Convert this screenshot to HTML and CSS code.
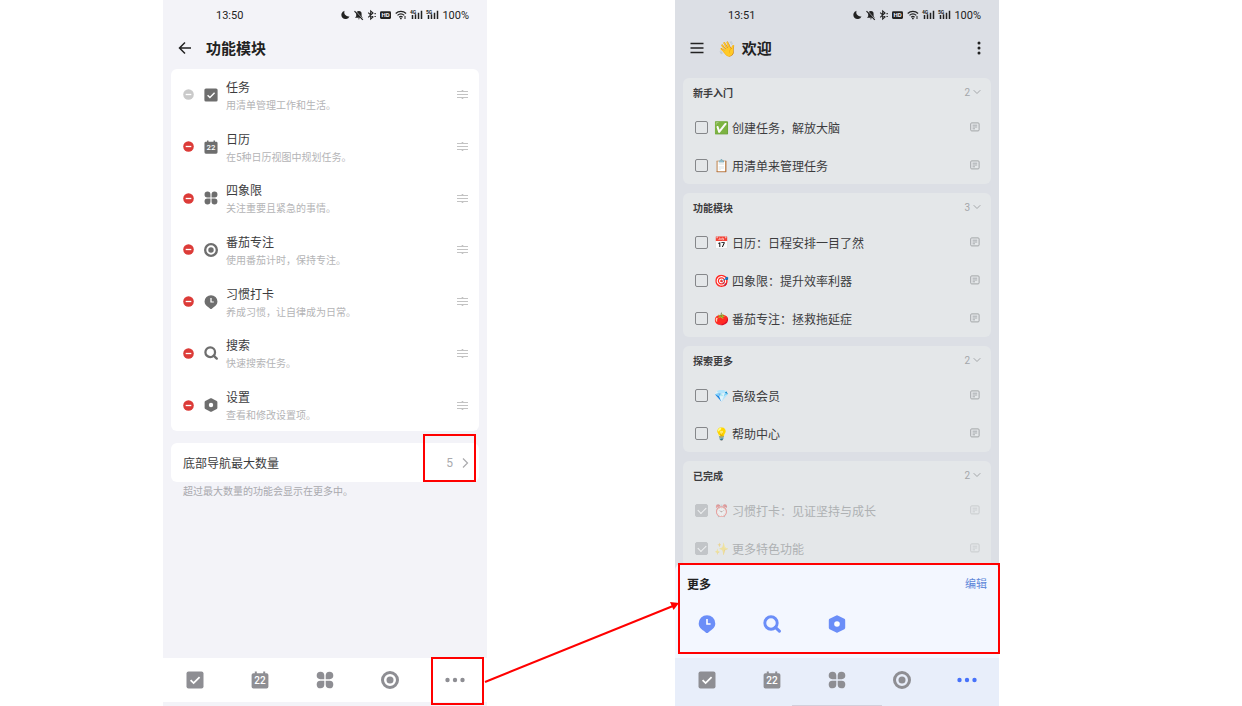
FILE: index.html
```
<!DOCTYPE html>
<html lang="zh-CN">

<head>
    <meta charset="UTF-8">
    <meta name="viewport" content="width=device-width, initial-scale=1.0">
    <title>功能模块</title>
    <link rel="stylesheet" href="styles.css">
</head>

<body>
    <!-- shared icons -->
    <svg class="sprite" aria-hidden="true">
        <symbol id="i-task" viewBox="0 0 18 18">
            <rect x="0.5" y="0.5" width="17" height="17" rx="2" fill="currentColor" />
            <path d="M4.6 9.2l3 2.9 6-6" fill="none" stroke="#fff" stroke-width="1.8" />
        </symbol>
        <symbol id="i-calendar" viewBox="0 0 18 18">
            <path d="M2.4 2.2h1.400V.6h2v1.6h6.4V.6h2v1.6h1.400a1.800 1.800 0 0 1 1.800 1.800v11.800a1.800 1.800 0 0 1-1.800 1.800H2.400a1.800 1.800 0 0 1-1.800-1.800V4a1.800 1.800 0 0 1 1.800-1.800z" fill="currentColor" />
            <text x="9" y="13.400" text-anchor="middle" class="cal-day">22</text>
        </symbol>
        <symbol id="i-quad" viewBox="0 0 18 18">
            <path d="M8.300 8.300H4.300A3.800 3.800 0 1 1 8.300 4.500zM9.700 8.300V4.500A3.800 3.800 0 1 1 13.700 8.300zM8.300 9.700v3.800A3.800 3.800 0 1 1 4.300 9.700zM9.700 9.700h4A3.800 3.800 0 1 1 9.700 13.500z" fill="currentColor" />
        </symbol>
        <symbol id="i-focus" viewBox="0 0 18 18">
            <circle cx="9" cy="9" r="7.500" fill="none" stroke="currentColor" stroke-width="3" />
            <circle cx="9" cy="9" r="3.500" fill="currentColor" />
        </symbol>
        <symbol id="i-habit" viewBox="0 0 18 18">
            <path d="M9 .2a8.300 8.300 0 0 1 8.300 8.200c0 3.600-2.700 5.700-5 7.400L10 17.700a1.600 1.600 0 0 1-2 0l-2.300-1.900C3.400 14.100.7 12 .7 8.400A8.300 8.300 0 0 1 9 .2z" fill="currentColor" />
            <path d="M9 4v5h3.600" fill="none" stroke="#fff" stroke-width="1.6" />
        </symbol>
        <symbol id="i-search" viewBox="0 0 18 18">
            <circle cx="8" cy="8" r="6.200" fill="none" stroke="currentColor" stroke-width="2.900" />
            <path d="M12.400 12.400l4 3.800" fill="none" stroke="currentColor" stroke-width="3" stroke-linecap="round" />
        </symbol>
        <symbol id="i-settings" viewBox="0 0 18 18">
            <path d="M9 1.800l6.700 3.400v7.600L9 16.200l-6.700-3.400V5.200z" fill="currentColor" stroke="currentColor" stroke-width="3" stroke-linejoin="round" />
            <circle cx="9" cy="9" r="2.800" fill="#fff" />
        </symbol>
        <symbol id="i-more" viewBox="0 0 20 18">
            <circle cx="2.500" cy="9" r="2.200" fill="currentColor" />
            <circle cx="10" cy="9" r="2.200" fill="currentColor" />
            <circle cx="17.500" cy="9" r="2.200" fill="currentColor" />
        </symbol>
        <symbol id="i-minus" viewBox="0 0 11 11">
            <circle cx="5.500" cy="5.500" r="5.300" fill="currentColor" />
            <path d="M2.700 5.500h5.600" stroke="#fff" stroke-width="1.300" />
        </symbol>
        <symbol id="i-drag" viewBox="0 0 11 11">
            <path d="M0 2.500h11M0 5.500h11M0 8.500h11M4.700 1.500h1.600M4.700 9.500h1.600" stroke="currentColor" stroke-width="0.900" />
        </symbol>
        <symbol id="i-note" viewBox="0 0 10 10">
            <rect x="0.700" y="0.900" width="8.400" height="8" rx="1" fill="none" stroke="currentColor" />
            <path d="M2.600 3.200h4.600M2.600 5h4.600M2.600 6.800h2.400" stroke="currentColor" stroke-width="0.900" />
        </symbol>
        <symbol id="i-down" viewBox="0 0 8 8">
            <path d="M.7 2.200L4 5.500l3.300-3.300" fill="none" stroke="currentColor" stroke-width="1" />
        </symbol>
        <symbol id="i-status" viewBox="0 0 99 12">
            <path d="M3.600 1.800A4.200 4.200 0 1 0 8.500 7.400 4.200 4.200 0 0 1 3.600 1.800z" fill="currentColor" />
            <path d="M14 8.800l1.200-1.500V4.800a2.700 2.700 0 0 1 5.400 0v2.500l1.200 1.500zM16.800 9.500h2.200l-1.100 1z" fill="currentColor" />
            <path d="M14.300 1.800l8 8.600" stroke="#e6e8ee" stroke-width="0.900" />
            <path d="M13.500 2.200l8.300 8.600" stroke="currentColor" stroke-width="1.200" />
            <path d="M27.200 3.700l4.800 4.300-2.300 2.100V1.900l2.300 2.100-4.800 4.300M33.500 4.600h1.300M33.500 7.500h1.300" fill="none" stroke="currentColor" stroke-width="1.100" />
            <rect x="39" y="2.300" width="11" height="7.600" rx="1.300" fill="currentColor" />
            <text x="44.500" y="8.200" text-anchor="middle" class="hd">HD</text>
            <path d="M54.700 4.500c3-2.900 7.400-2.900 10.400 0M56.500 6.400c2-1.900 4.800-1.900 6.800 0M58.200 8.200c1.100-1 2.300-1 3.400 0" fill="none" stroke="currentColor" stroke-width="1.200" />
            <circle cx="59.900" cy="9.400" r="0.900" fill="currentColor" />
            <path d="M64 7v3" stroke="currentColor" />
            <text x="69" y="4.800" class="net">4G</text>
            <path d="M71.500 10V6M74.500 10V5.300M77.500 10V3.800M80.500 10V1.800" stroke="currentColor" stroke-width="1.500" />
            <text x="85" y="4.800" class="net">5G</text>
            <path d="M87.500 10V6M90.500 10V5.300M93.500 10V3.800M96.500 10V1.800" stroke="currentColor" stroke-width="1.500" />
        </symbol>
    </svg>

    <main class="stage">
        <section class="phone phone-modules">
            <div class="status">
                <span>13:50</span>
                <svg class="status-icons"><use href="#i-status" /></svg>
                <span>100%</span>
            </div>
            <header class="topbar">
                <button class="icon-btn" aria-label="返回">
                    <svg width="14" height="14" viewBox="0 0 14 14"><path d="M7 1.500L1.500 7 7 12.500M1.500 7H13" fill="none" stroke="currentColor" stroke-width="1.500" /></svg>
                </button>
                <h1>功能模块</h1>
            </header>

            <ul class="modules">
                <li>
                    <button class="icon-btn remove" aria-label="移除任务" disabled><svg><use href="#i-minus" /></svg></button>
                    <svg class="module-icon"><use href="#i-task" /></svg>
                    <div class="module-text"><h2>任务</h2><p>用清单管理工作和生活。</p></div>
                    <button class="icon-btn drag" aria-label="排序"><svg><use href="#i-drag" /></svg></button>
                </li>
                <li>
                    <button class="icon-btn remove" aria-label="移除日历"><svg><use href="#i-minus" /></svg></button>
                    <svg class="module-icon"><use href="#i-calendar" /></svg>
                    <div class="module-text"><h2>日历</h2><p>在5种日历视图中规划任务。</p></div>
                    <button class="icon-btn drag" aria-label="排序"><svg><use href="#i-drag" /></svg></button>
                </li>
                <li>
                    <button class="icon-btn remove" aria-label="移除四象限"><svg><use href="#i-minus" /></svg></button>
                    <svg class="module-icon"><use href="#i-quad" /></svg>
                    <div class="module-text"><h2>四象限</h2><p>关注重要且紧急的事情。</p></div>
                    <button class="icon-btn drag" aria-label="排序"><svg><use href="#i-drag" /></svg></button>
                </li>
                <li>
                    <button class="icon-btn remove" aria-label="移除番茄专注"><svg><use href="#i-minus" /></svg></button>
                    <svg class="module-icon"><use href="#i-focus" /></svg>
                    <div class="module-text"><h2>番茄专注</h2><p>使用番茄计时，保持专注。</p></div>
                    <button class="icon-btn drag" aria-label="排序"><svg><use href="#i-drag" /></svg></button>
                </li>
                <li>
                    <button class="icon-btn remove" aria-label="移除习惯打卡"><svg><use href="#i-minus" /></svg></button>
                    <svg class="module-icon"><use href="#i-habit" /></svg>
                    <div class="module-text"><h2>习惯打卡</h2><p>养成习惯，让自律成为日常。</p></div>
                    <button class="icon-btn drag" aria-label="排序"><svg><use href="#i-drag" /></svg></button>
                </li>
                <li>
                    <button class="icon-btn remove" aria-label="移除搜索"><svg><use href="#i-minus" /></svg></button>
                    <svg class="module-icon"><use href="#i-search" /></svg>
                    <div class="module-text"><h2>搜索</h2><p>快速搜索任务。</p></div>
                    <button class="icon-btn drag" aria-label="排序"><svg><use href="#i-drag" /></svg></button>
                </li>
                <li>
                    <button class="icon-btn remove" aria-label="移除设置"><svg><use href="#i-minus" /></svg></button>
                    <svg class="module-icon"><use href="#i-settings" /></svg>
                    <div class="module-text"><h2>设置</h2><p>查看和修改设置项。</p></div>
                    <button class="icon-btn drag" aria-label="排序"><svg><use href="#i-drag" /></svg></button>
                </li>
            </ul>

            <button class="max-count">
                <span>底部导航最大数量</span>
                <span class="count">5</span>
                <svg width="7" height="12" viewBox="0 0 7 12"><path d="M1 1.500L5.500 6 1 10.500" fill="none" stroke="#aaaaad" stroke-width="1.200" /></svg>
                <span class="mark mark-count"></span>
            </button>
            <p class="hint">超过最大数量的功能会显示在更多中。</p>

            <nav class="tabs">
                <a href="#task" aria-label="任务"><svg><use href="#i-task" /></svg></a>
                <a href="#calendar" aria-label="日历"><svg><use href="#i-calendar" /></svg></a>
                <a href="#quad" aria-label="四象限"><svg><use href="#i-quad" /></svg></a>
                <a href="#focus" aria-label="番茄专注"><svg><use href="#i-focus" /></svg></a>
                <a href="#more" aria-label="更多"><svg class="more"><use href="#i-more" /></svg></a>
                <span class="mark mark-more"></span>
            </nav>
        </section>

        <!-- arrow between the two phones -->
        <svg class="arrow" viewBox="0 0 188 706" preserveAspectRatio="none" aria-hidden="true">
            <path d="M-2 682L186 606" stroke="#f00" stroke-width="2" />
            <path d="M192 603l-9-1 3.500 8z" fill="#f00" />
        </svg>

        <section class="phone phone-welcome">
            <div class="status">
                <span>13:51</span>
                <svg class="status-icons"><use href="#i-status" /></svg>
                <span>100%</span>
            </div>
            <header class="topbar">
                <button class="icon-btn" aria-label="菜单">
                    <svg width="14" height="14" viewBox="0 0 14 14"><path d="M.5 2.500h13M.5 7h13M.5 11.500h13" stroke="currentColor" stroke-width="1.300" /></svg>
                </button>
                <h1><span class="emoji">👋</span>欢迎</h1>
                <button class="icon-btn" aria-label="更多选项">
                    <svg width="4" height="14" viewBox="0 0 4 14"><path d="M2 2h.01M2 7h.01M2 12h.01" stroke="currentColor" stroke-width="3" stroke-linecap="round" /></svg>
                </button>
            </header>

            <div class="groups">
                <section class="group">
                    <h2>新手入门 <span>2</span><svg><use href="#i-down" /></svg></h2>
                    <label><input type="checkbox"><span class="emoji">✅</span><span class="name">创建任务，解放大脑</span><svg><use href="#i-note" /></svg></label>
                    <label><input type="checkbox"><span class="emoji">📋</span><span class="name">用清单来管理任务</span><svg><use href="#i-note" /></svg></label>
                </section>
                <section class="group">
                    <h2>功能模块 <span>3</span><svg><use href="#i-down" /></svg></h2>
                    <label><input type="checkbox"><span class="emoji">📅</span><span class="name">日历：日程安排一目了然</span><svg><use href="#i-note" /></svg></label>
                    <label><input type="checkbox"><span class="emoji">🎯</span><span class="name">四象限：提升效率利器</span><svg><use href="#i-note" /></svg></label>
                    <label><input type="checkbox"><span class="emoji">🍅</span><span class="name">番茄专注：拯救拖延症</span><svg><use href="#i-note" /></svg></label>
                </section>
                <section class="group">
                    <h2>探索更多 <span>2</span><svg><use href="#i-down" /></svg></h2>
                    <label><input type="checkbox"><span class="emoji">💎</span><span class="name">高级会员</span><svg><use href="#i-note" /></svg></label>
                    <label><input type="checkbox"><span class="emoji">💡</span><span class="name">帮助中心</span><svg><use href="#i-note" /></svg></label>
                </section>
                <section class="group done">
                    <h2>已完成 <span>2</span><svg><use href="#i-down" /></svg></h2>
                    <label><input type="checkbox" checked><span class="emoji">⏰</span><span class="name">习惯打卡：见证坚持与成长</span><svg><use href="#i-note" /></svg></label>
                    <label><input type="checkbox" checked><span class="emoji">✨</span><span class="name">更多特色功能</span><svg><use href="#i-note" /></svg></label>
                </section>
            </div>

            <section class="sheet">
                <div class="sheet-head">
                    <h2>更多</h2>
                    <button>编辑</button>
                </div>
                <div class="sheet-items">
                    <a href="#habit" aria-label="习惯打卡"><svg><use href="#i-habit" /></svg></a>
                    <a href="#search" aria-label="搜索"><svg><use href="#i-search" /></svg></a>
                    <a href="#settings" aria-label="设置"><svg><use href="#i-settings" /></svg></a>
                </div>
                <span class="mark mark-sheet"></span>
            </section>

            <nav class="tabs">
                <a href="#task" aria-label="任务"><svg><use href="#i-task" /></svg></a>
                <a href="#calendar" aria-label="日历"><svg><use href="#i-calendar" /></svg></a>
                <a href="#quad" aria-label="四象限"><svg><use href="#i-quad" /></svg></a>
                <a href="#focus" aria-label="番茄专注"><svg><use href="#i-focus" /></svg></a>
                <a href="#more" aria-label="更多" class="active"><svg class="more"><use href="#i-more" /></svg></a>
                <span class="home-bar"></span>
            </nav>
        </section>
    </main>
</body>

</html>
```
FILE: styles.css
```
* {
    box-sizing: border-box;
}

body {
    margin: 0;
    background-color: #fff;
    font-family: Roboto, "Noto Sans CJK SC", sans-serif;
    font-size: 12px;
    color: #3c3c3e;
}

h1,
h2,
p,
ul {
    margin: 0;
    padding: 0;
    list-style: none;
}

svg {
    display: block;
    flex: none;
}

button {
    margin: 0;
    padding: 0;
    border: none;
    background: none;
    font: inherit;
    color: inherit;
    cursor: pointer;
}

.sprite {
    display: none;
}

.cal-day {
    font-size: 10px;
    font-weight: 500;
    fill: #fff;
}

.hd {
    font-size: 6px;
    font-weight: bold;
    fill: #f3f3f8;
}

.net {
    font-size: 5px;
    font-weight: bold;
    fill: currentColor;
}

.stage {
    display: grid;
    grid-template-columns: 163fr 324fr 188fr 324fr 243fr;
    grid-template-rows: 100vh;
}

.phone {
    display: flex;
    flex-direction: column;
    min-width: 0;
}

.phone-modules {
    grid-column: 2;
    background-color: #f3f3f8;
}

.phone-welcome {
    grid-column: 4;
    background-color: #dcdfe5;
}

.arrow {
    grid-column: 3;
    width: 100%;
    height: 100%;
    overflow: visible;
    z-index: 1;
}

/* status bar and title */
.status {
    display: flex;
    align-items: center;
    height: 30px;
    padding: 0 18px 0 53px;
    font-size: 11px;
    color: #222;
}

.status-icons {
    width: 99px;
    height: 12px;
    margin-left: auto;
    margin-right: 2px;
}

.topbar {
    display: flex;
    align-items: center;
    gap: 14px;
    height: 36px;
    padding: 0 18px 0 15px;
    color: #222;
}

.topbar h1 {
    flex: 1;
    display: flex;
    align-items: center;
    gap: 5px;
    padding-top: 2px;
    font-size: 15px;
    line-height: 24px;
    font-weight: bold;
}

.emoji {
    font-family: "Noto Color Emoji", sans-serif;
    font-weight: normal;
}

/* module list */
.modules {
    display: grid;
    grid-auto-rows: 1fr;
    height: 362px;
    margin: 3px 8px 0;
    border-radius: 6px;
    background-color: #fff;
}

.modules li {
    display: flex;
    align-items: center;
    padding: 0 11px 0 12px;
}

.remove {
    color: #dc3b38;
}

.remove:disabled {
    color: #cacaca;
    cursor: default;
}

.remove svg,
.drag svg {
    width: 11px;
    height: 11px;
}

.drag {
    color: #bcbcbc;
}

.module-icon {
    width: 14px;
    height: 14px;
    margin: 0 8px 0 10px;
    color: #6e6e6e;
}

.module-text {
    flex: 1;
    padding-top: 4px;
}

.module-text h2 {
    font-size: 12px;
    line-height: 18px;
    font-weight: normal;
}

.module-text p {
    font-size: 10px;
    line-height: 18px;
    color: #b4b4b6;
}

.max-count {
    position: relative;
    display: flex;
    align-items: center;
    height: 39px;
    margin: 12px 8px 0;
    padding: 0 10px 0 12px;
    border-radius: 6px;
    background-color: #fff;
}

.count {
    margin-left: auto;
    margin-right: 9px;
    color: #aaaaad;
}

.hint {
    padding: 0 20px;
    font-size: 10px;
    line-height: 20px;
    color: #a9a9ae;
}

/* bottom navigation */
.tabs {
    position: relative;
    display: flex;
    align-items: center;
    height: 44px;
    margin-top: auto;
    color: #8e8e93;
}

.tabs a,
.sheet-items a {
    display: flex;
    justify-content: center;
    width: 20%;
    color: inherit;
}

.tabs svg,
.sheet-items svg {
    width: 18px;
    height: 18px;
}

.tabs .more {
    width: 20px;
}

.tabs .active {
    color: #4772fa;
}

.phone-modules .tabs {
    margin-bottom: 4px;
    background-color: #fff;
}

.phone-welcome .tabs {
    flex: none;
    height: 48px;
    padding-bottom: 4px;
    background-color: #e8eefa;
}

.home-bar {
    position: absolute;
    bottom: 0;
    left: 36%;
    width: 28%;
    height: 1px;
    background-color: #d3cfdb;
}

/* task groups */
.groups {
    flex: 1;
    display: flex;
    flex-direction: column;
    gap: 9px;
    min-height: 0;
    padding: 12px 8px 0;
    overflow: hidden;
}

.group {
    flex: none;
    border-radius: 6px;
    background-color: #e4e7e9;
}

.group h2 {
    display: flex;
    align-items: center;
    height: 30px;
    padding: 0 10px 2px;
    font-size: 10px;
    font-weight: bold;
}

.group h2 span {
    margin-left: auto;
    margin-right: 3px;
    font-weight: normal;
    color: #a3a6a9;
}

.group h2 svg {
    width: 8px;
    height: 8px;
    color: #a3a6a9;
}

.group label {
    display: flex;
    align-items: center;
    height: 38px;
    padding: 0 11px 0 12px;
}

.group label .emoji {
    width: 15px;
    padding-top: 2px;
    margin: 0 3px 0 6px;
}

.group label svg {
    width: 10px;
    height: 10px;
    margin-left: auto;
    color: #a3a6a9;
}

.group input {
    appearance: none;
    display: grid;
    place-items: center;
    width: 13px;
    height: 13px;
    margin: 0;
    border: 1px solid #85878a;
    border-radius: 2px;
}

.group input:checked {
    border-color: #c2c5c8;
    background-color: #c2c5c8;
}

.group input:checked::before {
    content: "";
    width: 7px;
    height: 4px;
    margin-bottom: 2px;
    border-left: 1px solid #f0f2f3;
    border-bottom: 1px solid #f0f2f3;
    transform: rotate(-45deg);
}

.done .name {
    color: #aeb1b3;
}

.done .emoji,
.done label svg {
    opacity: 0.4;
}

/* more sheet */
.sheet {
    position: relative;
    display: flex;
    flex-direction: column;
    flex: none;
    height: 95px;
    border-radius: 8px 8px 0 0;
    background-color: #f3f7ff;
}

.sheet-head {
    display: flex;
    align-items: center;
    justify-content: space-between;
    height: 40px;
    padding: 0 12px;
}

.sheet-head h2 {
    font-size: 12px;
    font-weight: bold;
    color: #222;
}

.sheet-head button {
    font-size: 11px;
    color: #5f87d9;
}

.sheet-items {
    display: flex;
    align-items: center;
    height: 42px;
    color: #6b8ef8;
}

/* red marks */
.mark {
    position: absolute;
    border: 2px solid #f00;
    pointer-events: none;
}

.mark-count {
    top: -9px;
    right: 3px;
    width: 53px;
    height: 48px;
}

.mark-more {
    top: -1px;
    right: 3px;
    width: 53px;
    height: 48px;
}

.mark-sheet {
    top: 0;
    bottom: 4px;
    left: 3px;
    right: -1px;
}
```
